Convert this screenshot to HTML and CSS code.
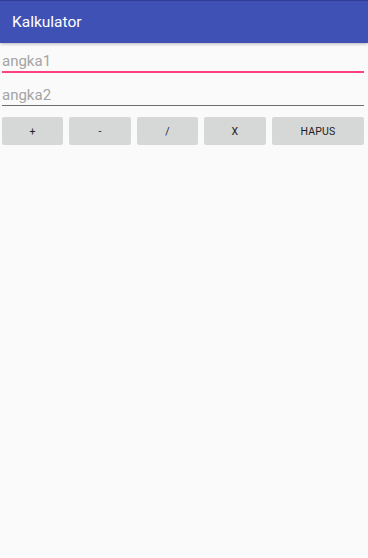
FILE: index.html
```html
<!DOCTYPE html>
<html lang="id">
<head>
<meta charset="utf-8">
<title>Kalkulator</title>
<link rel="stylesheet" href="styles.css">
</head>
<body>
<header class="appbar">
  <h1 class="title">Kalkulator</h1>
</header>
<main class="content">
  <input class="field field-active" type="text" placeholder="angka1">
  <input class="field field-second" type="text" placeholder="angka2">
  <div class="buttons">
    <button class="btn">+</button>
    <button class="btn">-</button>
    <button class="btn">/</button>
    <button class="btn">X</button>
    <button class="btn">HAPUS</button>
  </div>
</main>
</body>
</html>
```
FILE: styles.css
```css
html, body {
  margin: 0;
  padding: 0;
  height: 100%;
}
body {
  background: #fafafa;
  font-family: Roboto, "Liberation Sans", sans-serif;
}
.appbar {
  position: relative;
  z-index: 1;
  height: 42px;
  border-top: 1px solid #2f3d95;
  background: #3f51b5;
  display: flex;
  align-items: center;
  padding-left: 12px;
  box-shadow: 0 1px 3px rgba(0,0,0,0.28);
}
.title {
  margin: 0;
  font-size: 15.5px;
  font-weight: 400;
  color: #ffffff;
}
.content {
  display: flex;
  flex-direction: column;
  padding: 0 4px 0 2px;
}
.field {
  display: block;
  width: 100%;
  box-sizing: content-box;
  margin: 0;
  padding: 0;
  border: none;
  background: transparent;
  font-family: Roboto, "Liberation Sans", sans-serif;
  font-size: 15px;
  color: #222;
  outline: none;
  height: 19px;
  line-height: 19px;
}
.field::placeholder {
  color: #a4a4a4;
}
.field-active {
  padding-top: 9px;
  border-bottom: 2px solid #ff4081;
}
.field-second {
  padding-top: 13px;
  border-bottom: 1px solid #6e6e6e;
}
.buttons {
  display: grid;
  grid-template-columns: 61px 62px 61px 62px 92px;
  column-gap: 6px;
  margin-top: 11px;
}
.btn {
  height: 28px;
  margin: 0;
  padding: 0;
  border: none;
  border-radius: 2px;
  background: #d6d7d7;
  color: #1e1e1e;
  font-family: Roboto, "Liberation Sans", sans-serif;
  font-size: 10.5px;
  font-weight: 400;
  letter-spacing: 0.2px;
}
```
